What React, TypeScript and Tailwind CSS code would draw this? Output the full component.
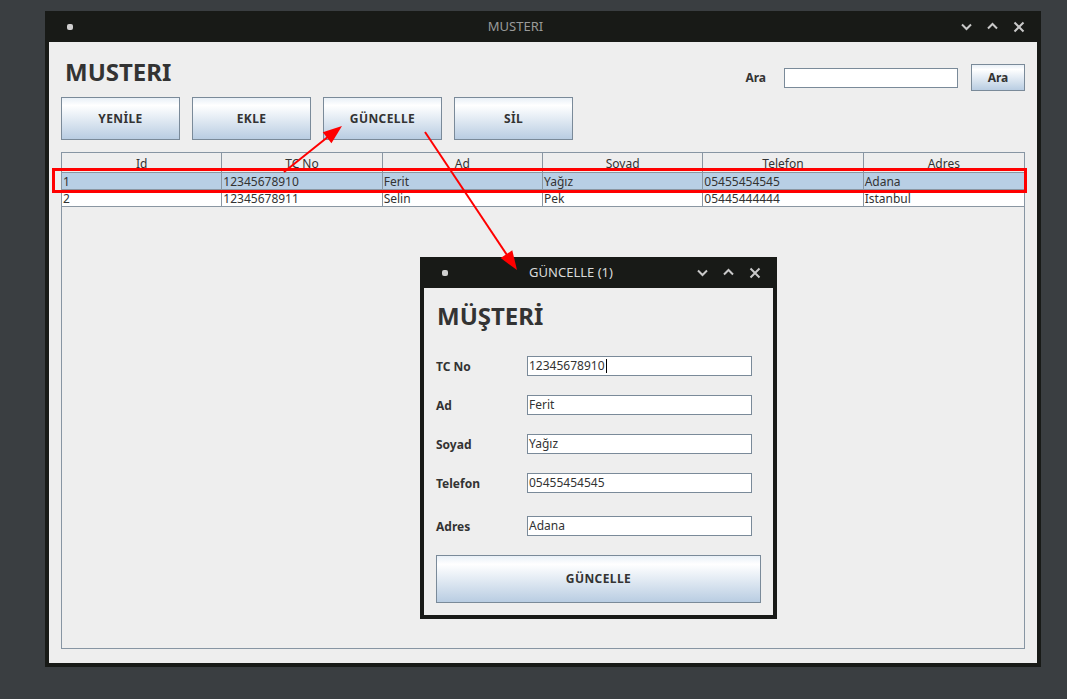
import React from 'react';

const FONT = "font-['Noto_Sans','Open_Sans',sans-serif]";

const COLUMNS = ['Id', 'TC No', 'Ad', 'Soyad', 'Telefon', 'Adres'];

const ROWS = [
  ['1', '12345678910', 'Ferit', 'Yağız', '05455454545', 'Adana'],
  ['2', '12345678911', 'Selin', 'Pek', '05445444444', 'İstanbul'],
];

// pencere başlığındaki küçük ikonlar
const TitleIcons: React.FC = () => (
  <div className="flex items-center gap-[15px] pl-[11px] pr-[11px] w-[87px]">
    <svg width="11" height="11" viewBox="0 0 11 11" fill="none" stroke="#c9c9c9" strokeWidth="2">
      <path d="M1 3.5 L5.5 8 L10 3.5" />
    </svg>
    <svg width="11" height="11" viewBox="0 0 11 11" fill="none" stroke="#c9c9c9" strokeWidth="2">
      <path d="M1 7.5 L5.5 3 L10 7.5" />
    </svg>
    <svg width="12" height="12" viewBox="0 0 12 12" fill="none" stroke="#c9c9c9" strokeWidth="2">
      <path d="M1.5 1.5 L10.5 10.5 M10.5 1.5 L1.5 10.5" />
    </svg>
  </div>
);

const TitleBar: React.FC<{ title: string; active?: boolean }> = ({ title, active }) => (
  <div className="h-[31px] flex items-center shrink-0">
    <div className="w-[32px] pl-[18px] flex items-center">
      <div className="w-[6px] h-[6px] rounded-[2px] bg-[#cfcfcf]" />
    </div>
    <div
      className={`flex-1 text-center text-[13px] ${active ? 'text-[#dadada]' : 'text-[#9a9a9a]'}`}
    >
      {title}
    </div>
    <TitleIcons />
  </div>
);

const SwingButton: React.FC<{ label: string; className?: string }> = ({ label, className }) => (
  <button
    className={`border border-[#7a8a99] bg-linear-to-b from-[#e9f0f7] via-white via-[18%] to-[#b9cde2] text-[12px] font-bold text-[#333333] tracking-[0.4px] flex items-center justify-center ${className ?? ''}`}
  >
    {label}
  </button>
);

const TextField: React.FC<{ value?: string; caret?: boolean; className?: string }> = ({
  value,
  caret,
  className,
}) => (
  <div
    className={`bg-white border border-[#7a8a99] flex items-center pl-[1px] text-[12px] text-[#333333] leading-none ${className ?? ''}`}
  >
    <span>{value}</span>
    {caret && <span className="w-px h-[14px] bg-black ml-px" />}
  </div>
);

// okların çizimi
const arrowHead = (x1: number, y1: number, x2: number, y2: number) => {
  const len = Math.hypot(x2 - x1, y2 - y1);
  const ux = (x2 - x1) / len;
  const uy = (y2 - y1) / len;
  const bx = x2 - ux * 19;
  const by = y2 - uy * 19;
  const px = -uy * 7;
  const py = ux * 7;
  return `${x2},${y2} ${bx + px},${by + py} ${bx - px},${by - py}`;
};

const Annotations: React.FC = () => (
  <svg className="absolute inset-0 pointer-events-none" width="1067" height="699">
    <rect x="53.5" y="169.5" width="972" height="22" fill="none" stroke="#ff0000" strokeWidth="3" />
    <line x1="284" y1="172" x2="334" y2="132" stroke="#ff0000" strokeWidth="2" />
    <polygon points={arrowHead(284, 172, 342, 126)} fill="#ff0000" />
    <line x1="425" y1="132" x2="511" y2="261" stroke="#ff0000" strokeWidth="2" />
    <polygon points={arrowHead(425, 132, 517, 270)} fill="#ff0000" />
  </svg>
);

const FormRow: React.FC<{ label: string; value: string; caret?: boolean; className?: string }> = ({
  label,
  value,
  caret,
  className,
}) => (
  <div className={`flex items-center h-[20px] ${className ?? ''}`}>
    <div className="w-[91px] text-[12px] font-bold text-[#333333] pt-px">{label}</div>
    <TextField value={value} caret={caret} className="w-[225px] h-[20px]" />
  </div>
);

const UpdateDialog: React.FC = () => (
  <div className="absolute left-[420px] top-[257px] w-[357px] h-[362px] bg-[#181a17] flex flex-col px-[4px] pb-[4px]">
    <TitleBar title="GÜNCELLE (1)" active />
    <div className="flex-1 bg-[#eeeeee] flex flex-col px-[12px] pt-[12px]">
      <h2 className="text-[24px] leading-[32px] font-bold text-[#333333] ml-[1px]">MÜŞTERİ</h2>
      <div className="mt-[24px] flex flex-col">
        <FormRow label="TC No" value="12345678910" caret />
        <FormRow label="Ad" value="Ferit" className="mt-[19px]" />
        <FormRow label="Soyad" value="Yağız" className="mt-[19px]" />
        <FormRow label="Telefon" value="05455454545" className="mt-[19px]" />
        <FormRow label="Adres" value="Adana" className="mt-[23px]" />
      </div>
      <SwingButton label="GÜNCELLE" className="mt-[19px] w-[325px] h-[48px]" />
    </div>
  </div>
);

const App: React.FC = () => {
  return (
    <div className={`relative min-h-[699px] bg-[#3a3e41] pt-[11px] pl-[45px] ${FONT}`}>
      {/* Ana pencere */}
      <div className="w-[996px] h-[656px] bg-[#181a17] flex flex-col px-[4px] pb-[4px]">
        <TitleBar title="MUSTERI" />
        <div className="flex-1 bg-[#eeeeee] flex flex-col pl-[12px] pr-[12px] pt-[14px] pb-[14px]">
          {/* Başlık ve arama */}
          <div className="flex items-start justify-between">
            <h1 className="text-[24px] leading-[32px] font-bold text-[#333333] ml-[4px]">MUSTERI</h1>
            <div className="flex items-center mt-[8px]">
              <span className="text-[12px] font-bold text-[#333333]">Ara</span>
              <TextField className="ml-[18px] w-[174px] h-[20px]" />
              <SwingButton label="Ara" className="ml-[13px] w-[54px] h-[27px] tracking-normal" />
            </div>
          </div>

          {/* Butonlar */}
          <div className="flex gap-[12px] mt-[6px]">
            {['YENİLE', 'EKLE', 'GÜNCELLE', 'SİL'].map((b) => (
              <SwingButton key={b} label={b} className="w-[119px] h-[43px]" />
            ))}
          </div>

          {/* Tablo */}
          <div className="mt-[12px] flex-1 border border-[#8795a3] bg-[#eeeeee] flex flex-col">
            <div className="grid grid-cols-6 h-[20px] border-b border-[#8a96a2]">
              {COLUMNS.map((c, i) => (
                <div
                  key={c}
                  className={`text-[12px] leading-[21px] text-[#333333] text-center ${
                    i < COLUMNS.length - 1 ? 'border-r border-[#8a96a2]' : ''
                  }`}
                >
                  {c}
                </div>
              ))}
            </div>
            {ROWS.map((row, ri) => (
              <div
                key={ri}
                className={`grid grid-cols-6 h-[17px] border-b border-[#8a96a2] overflow-hidden ${
                  ri === 0 ? 'bg-[#b8cfe5]' : 'bg-white'
                }`}
              >
                {row.map((cell, ci) => (
                  <div
                    key={ci}
                    className={`text-[12px] leading-[17px] text-[#333333] pl-[1px] overflow-hidden ${
                      ci < row.length - 1 ? 'border-r border-[#8a96a2]' : ''
                    }`}
                  >
                    {cell}
                  </div>
                ))}
              </div>
            ))}
          </div>
        </div>
      </div>

      <UpdateDialog />
      <Annotations />
    </div>
  );
};

export default App;
